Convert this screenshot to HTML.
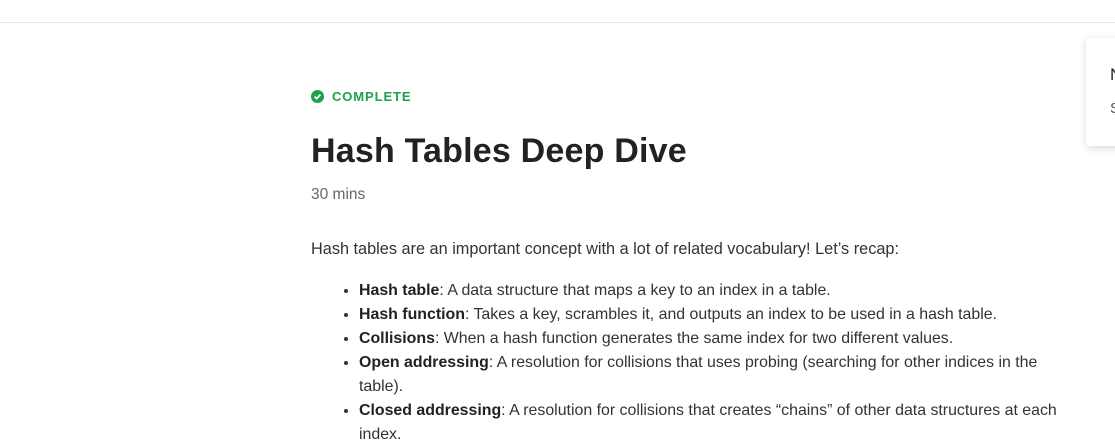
<!DOCTYPE html>
<html><head><style>
body{margin:0;width:1115px;height:431px;overflow:hidden;background:#fff;font-family:"Liberation Sans",sans-serif;color:#222;position:relative}
.top{position:absolute;top:0;left:0;right:0;height:22px;border-bottom:1px solid #e6e6e6}
.card{position:absolute;left:1086px;top:38px;width:60px;height:108px;background:#fff;box-shadow:0 2px 8px rgba(0,0,0,.15);border-radius:3px}
.card span{position:absolute;left:24px;font-size:17px}
.c{position:absolute;left:311px;top:89px;color:#1aa34a;font-size:13px;letter-spacing:0.9px;font-weight:bold;display:flex;align-items:center}
.c svg{margin-right:8px}
h1{position:absolute;left:311px;top:132px;margin:0;font-size:34px;font-weight:bold;color:#222;letter-spacing:0.2px}
.m{position:absolute;left:311px;top:186px;font-size:15.5px;color:#666}
.p{position:absolute;left:311px;top:240px;font-size:16.3px;color:#333}
ul{position:absolute;left:311px;top:279px;margin:0;padding-left:48px;width:710px;font-size:15.9px;line-height:24px;color:#333}
b{color:#222}
</style></head><body>
<div class="top"></div>
<div class="card"><span style="top:27px">N</span><span style="top:62px;font-size:15px;color:#555">S</span></div>
<div class="c"><svg width="13" height="13" viewBox="0 0 13 13"><circle cx="6.5" cy="6.5" r="6.5" fill="#1aa34a"/><path d="M3.6 6.6l2 2 3.8-4" stroke="#fff" stroke-width="1.8" fill="none"/></svg>COMPLETE</div>
<h1>Hash Tables Deep Dive</h1>
<div class="m">30 mins</div>
<div class="p">Hash tables are an important concept with a lot of related vocabulary! Let’s recap:</div>
<ul>
<li><b>Hash table</b>: A data structure that maps a key to an index in a table.</li>
<li><b>Hash function</b>: Takes a key, scrambles it, and outputs an index to be used in a hash table.</li>
<li><b>Collisions</b>: When a hash function generates the same index for two different values.</li>
<li><b>Open addressing</b>: A resolution for collisions that uses probing (searching for other indices in the table).</li>
<li><b>Closed addressing</b>: A resolution for collisions that creates “chains” of other data structures at each index.</li>
</ul>
</body></html>
